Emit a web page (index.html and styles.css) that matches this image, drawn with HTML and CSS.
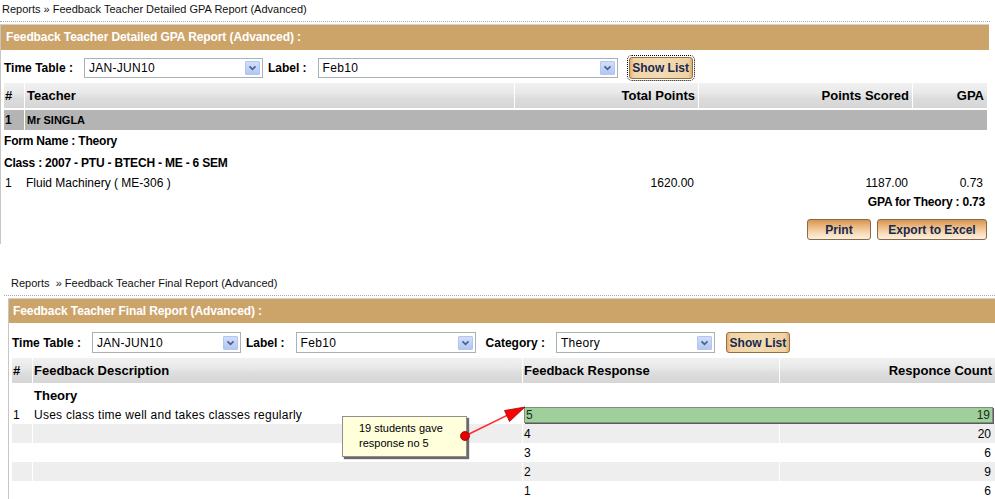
FILE: index.html
```html
<!DOCTYPE html>
<html>
<head>
<meta charset="utf-8">
<title>Feedback Teacher Reports</title>
<link rel="stylesheet" href="styles.css">
</head>
<body>
<div class="page">

  <section class="report r1">
    <div class="crumb">Reports » Feedback Teacher Detailed GPA Report (Advanced)</div>
    <div class="box">
      <div class="titlebar">Feedback Teacher Detailed GPA Report (Advanced) :</div>
      <div class="filters">
        <span class="flabel first">Time Table :</span>
        <span class="select w-a1"><span class="val">JAN-JUN10</span><span class="drop"><svg viewBox="0 0 15 14" width="15" height="14"><path d="M4 5 L7.5 8.5 L11 5" fill="none" stroke="#4d6185" stroke-width="2"/></svg></span></span>
        <span class="flabel">Label :</span>
        <span class="select w-b1"><span class="val">Feb10</span><span class="drop"><svg viewBox="0 0 15 14" width="15" height="14"><path d="M4 5 L7.5 8.5 L11 5" fill="none" stroke="#4d6185" stroke-width="2"/></svg></span></span>
        <button class="btn showlist focused">Show List</button>
      </div>
      <table class="grid g1">
        <tr class="hd">
          <th class="c-num">#</th>
          <th class="sep g1-b">Teacher</th>
          <th class="sep g1-c r">Total Points</th>
          <th class="sep g1-d r">Points Scored</th>
          <th class="sep g1-e r">GPA</th>
        </tr>
        <tr class="teacher">
          <td>1</td>
          <td class="sep" colspan="4">Mr SINGLA</td>
        </tr>
        <tr class="info first">
          <td colspan="5">Form Name : Theory</td>
        </tr>
        <tr class="info">
          <td colspan="5">Class : 2007 - PTU - BTECH - ME - 6 SEM</td>
        </tr>
        <tr class="item">
          <td>1</td>
          <td>Fluid Machinery ( ME-306 )</td>
          <td class="r num">1620.00</td>
          <td class="r num">1187.00</td>
          <td class="r num">0.73</td>
        </tr>
        <tr class="info total">
          <td colspan="5" class="r">GPA for Theory : 0.73</td>
        </tr>
      </table>
      <div class="actions">
        <button class="btn big print">Print</button>
        <button class="btn big export">Export to Excel</button>
      </div>
    </div>
  </section>

  <section class="report r2">
    <div class="crumb">Reports&nbsp; » Feedback Teacher Final Report (Advanced)</div>
    <div class="box">
      <div class="titlebar">Feedback Teacher Final Report (Advanced) :</div>
      <div class="filters">
        <span class="flabel first">Time Table :</span>
        <span class="select w-a2"><span class="val">JAN-JUN10</span><span class="drop"><svg viewBox="0 0 15 14" width="15" height="14"><path d="M4 5 L7.5 8.5 L11 5" fill="none" stroke="#4d6185" stroke-width="2"/></svg></span></span>
        <span class="flabel">Label :</span>
        <span class="select w-b2"><span class="val">Feb10</span><span class="drop"><svg viewBox="0 0 15 14" width="15" height="14"><path d="M4 5 L7.5 8.5 L11 5" fill="none" stroke="#4d6185" stroke-width="2"/></svg></span></span>
        <span class="flabel wide">Category :</span>
        <span class="select w-c2"><span class="val">Theory</span><span class="drop"><svg viewBox="0 0 15 14" width="15" height="14"><path d="M4 5 L7.5 8.5 L11 5" fill="none" stroke="#4d6185" stroke-width="2"/></svg></span></span>
        <button class="btn showlist">Show List</button>
      </div>
      <table class="grid g2">
        <tr class="hd">
          <th class="c-num">#</th>
          <th class="sep g2-b">Feedback Description</th>
          <th class="sep g2-c">Feedback Response</th>
          <th class="sep g2-d r">Responce Count</th>
        </tr>
        <tr class="group">
          <td></td>
          <td class="sep" colspan="3">Theory</td>
        </tr>
        <tr class="resp">
          <td>1</td>
          <td class="sep">Uses class time well and takes classes regularly</td>
          <td class="sep barcell" colspan="2"><div class="bar"><span>5</span><span>19</span></div></td>
        </tr>
        <tr class="resp alt">
          <td></td>
          <td class="sep"></td>
          <td class="sep">4</td>
          <td class="sep r num">20</td>
        </tr>
        <tr class="resp">
          <td></td>
          <td class="sep"></td>
          <td class="sep">3</td>
          <td class="sep r num">6</td>
        </tr>
        <tr class="resp alt">
          <td></td>
          <td class="sep"></td>
          <td class="sep">2</td>
          <td class="sep r num">9</td>
        </tr>
        <tr class="resp">
          <td></td>
          <td class="sep"></td>
          <td class="sep">1</td>
          <td class="sep r num">6</td>
        </tr>
      </table>
    </div>
  </section>

  <div class="callout">19 students gave<br>response no 5</div>
  <svg class="pointer" width="995" height="499" viewBox="0 0 995 499">
    <line x1="465" y1="436" x2="510" y2="414" stroke="#ff2a2a" stroke-width="1.5"/>
    <polygon points="525,407 504.5,410.5 509.5,421.5" fill="#ff0000" stroke="#8a1010" stroke-width="0.8"/>
    <circle cx="465" cy="436" r="4.5" fill="#e60000" stroke="#900" stroke-width="0.8"/>
  </svg>
</div>
</body>
</html>
```

FILE: styles.css
```css
* { box-sizing: border-box; }

html, body {
  margin: 0;
  padding: 0;
  background: #ffffff;
  overflow: hidden;
}

body {
  font-family: "Liberation Sans", Arial, sans-serif;
  font-size: 12px;
  color: #000;
}

.page {
  position: relative;
  width: 995px;
  height: 499px;
}

/* ---------- report blocks ---------- */
.report { display: block; }

.r1 { width: 990px; }

.r2 {
  margin-top: 30px;
  margin-left: 4px;
  width: 991px;
}

.crumb {
  height: 22px;
  padding: 2px 0 0 2px;
  font-size: 11px;
  line-height: 14px;
  color: #111;
  border-bottom: 1px dotted #a8a8a8;
  white-space: nowrap;
}

.r2 .crumb { padding-left: 7px; }

.box {
  margin-top: 2px;
  border-top: 1px solid #d2d2d2;
  border-left: 1px solid #c6c6c6;
}

.r1 .box {
  width: 989px;
  padding-bottom: 4px;
}

.r2 .box {
  margin-left: 4px;
  width: 987px;
}

.titlebar {
  height: 25px;
  line-height: 25px;
  padding-left: 5px;
  background: #cca46a;
  color: #fff;
  font-weight: bold;
  font-size: 12px;
  letter-spacing: -0.1px;
  white-space: nowrap;
}

.r2 .titlebar {
  height: 24px;
  line-height: 24px;
  padding-left: 4px;
}

/* ---------- filters ---------- */
.filters {
  display: flex;
  align-items: center;
  height: 33px;
  padding: 2px 0 0 3px;
}

.r2 .filters {
  height: 35px;
  padding-top: 4px;
}

.flabel {
  font-weight: bold;
  font-size: 12px;
  margin: 0 11px 0 5px;
  white-space: nowrap;
}

.flabel.first { margin-left: 0; }
.flabel.wide { margin-left: 10px; }

.select {
  display: flex;
  align-items: center;
  height: 20px;
  border: 1px solid #a9b0b6;
  background: #fff;
  padding-left: 4px;
  font-size: 12px;
  letter-spacing: 0.3px;
}

.r2 .select { height: 21px; }

.select .val { flex: 1; white-space: nowrap; }

.select .drop {
  display: flex;
  width: 15px;
  height: 14px;
  margin-right: 2px;
  border: 1px solid #b3c6ee;
  border-radius: 1px;
  background: linear-gradient(#d0defb, #b2c7f4);
}

.select .drop svg { display: block; width: 13px; height: 12px; }

.w-a1 { width: 179px; }
.w-b1 { width: 300px; }
.w-a2 { width: 149px; }
.w-b2 { width: 180px; }
.w-c2 { width: 159px; }

/* ---------- buttons ---------- */
.btn {
  font-family: "Liberation Sans", Arial, sans-serif;
  font-weight: bold;
  font-size: 12px;
  color: #14294f;
  border: 1px solid #93703f;
  border-radius: 3px;
  padding: 0;
  cursor: pointer;
}

.showlist {
  width: 64px;
  height: 21px;
  margin-left: 11px;
  background: linear-gradient(to right, #e4b071 0, #f2d4a6 4px, #f4dbb3 50%, #f0d2a3 94%, #e2ad6c 100%);
}

.r1 .showlist { height: 22px; }

.focused {
  outline: 1px dotted #000;
  outline-offset: 1px;
}

.actions {
  display: flex;
  justify-content: flex-end;
  gap: 6px;
  width: 986px;
  margin-top: 7px;
}

.big {
  height: 21px;
  background: linear-gradient(#d69452 0%, #eab57b 30%, #f7dcbb 70%, #fcefdf 100%);
  border-color: #8b6b45;
}

.print { width: 64px; }
.export { width: 110px; }

/* ---------- grids ---------- */
.grid {
  border-collapse: separate;
  border-spacing: 0;
  table-layout: fixed;
  margin-left: 3px;
  width: 983px;
}

.grid th,
.grid td {
  padding: 0 2px;
  white-space: nowrap;
  overflow: hidden;
  text-align: left;
  vertical-align: middle;
}

.grid .sep { border-left: 1px solid #fff; }
.grid .r { text-align: right; }

.grid .hd th {
  height: 27px;
  border-bottom: 2px solid #fff;
  font-size: 13px;
  font-weight: bold;
  background: linear-gradient(#f1f1f1 0%, #e9e9e9 38%, #dcdcdc 62%, #d6d6d6 100%);
  background-clip: padding-box;
}

.grid .hd th.r { padding-right: 3px; }
.grid .hd th.c-num { padding-left: 1px; }

.c-num { width: 20px; }
.g1-b { width: 490px; }
.g1-c { width: 184px; }
.g1-d { width: 214px; }
.g1-e { width: 75px; }

.g2-b { width: 490px; }
.g2-c { width: 257px; }
.g2-d { width: 216px; }

/* report 1 rows */
.teacher td {
  height: 20px;
  background: #b4b4b4;
  font-weight: bold;
  font-size: 11px;
}

.teacher td:first-child { font-size: 12px; padding-left: 1px; }

.info td {
  height: 20px;
  padding: 0;
  font-weight: bold;
  font-size: 12px;
  letter-spacing: -0.2px;
}

.info.first td {
  height: 23px;
  vertical-align: bottom;
  padding-bottom: 2px;
}

.info.first td,
.info td { line-height: 20px; }

.info.total td {
  padding-right: 2px;
  height: 20px;
}

.item td {
  height: 19px;
  font-size: 12px;
}

.item td:first-child { padding-left: 1px; }
.grid .num { padding-right: 4px; }

/* report 2 rows */
.g2 .hd th { padding-left: 1px; }

.group td {
  height: 20px;
  padding-left: 1px;
  font-weight: bold;
  font-size: 13px;
}

.resp td {
  height: 19px;
  padding-left: 1px;
  font-size: 12px;
}

.resp.alt td { background: #eeeeee; }

.resp td.num { padding-right: 4px; }

.resp td:nth-child(2) { letter-spacing: 0.25px; }

.resp td.barcell {
  padding: 1px 2px 1px 1px;
}

.bar {
  display: flex;
  justify-content: space-between;
  align-items: center;
  height: 16px;
  padding: 0 2px 0 1px;
  background: #9fcf9b;
  border: 1px solid #7f917d;
  box-shadow: 1px 1px 0 #5a5a5a;
  color: #1a2a1a;
  font-size: 12px;
}

/* ---------- annotation ---------- */
.callout {
  position: absolute;
  left: 342px;
  top: 416px;
  width: 125px;
  height: 41px;
  padding: 4px 0 0 16px;
  background: #ffffdc;
  border: 1px solid #8f8f8f;
  box-shadow: 2px 2px 1px #6a6a6a;
  font-size: 11px;
  line-height: 15px;
  color: #000;
}

.pointer {
  position: absolute;
  left: 0;
  top: 0;
  pointer-events: none;
}
```
